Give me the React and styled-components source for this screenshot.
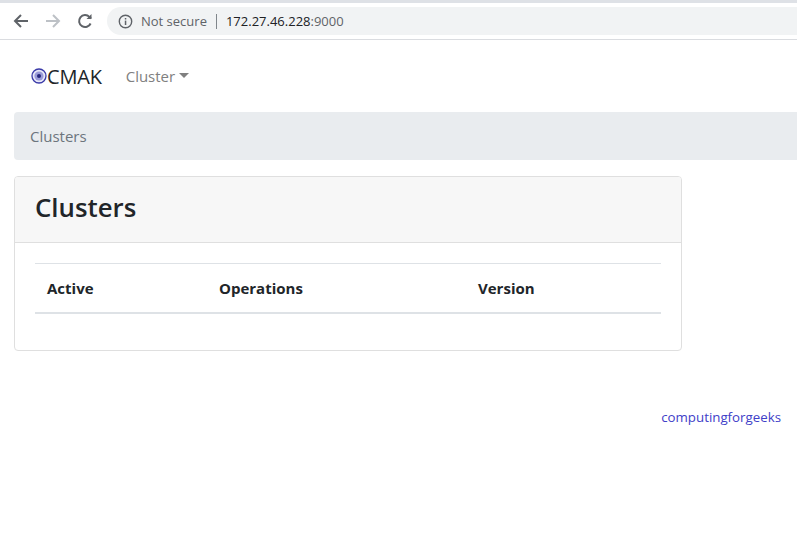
import React from 'react';
import styled, { createGlobalStyle } from 'styled-components';

const GlobalStyle = createGlobalStyle`
  html, body {
    margin: 0;
    padding: 0;
    background: #fff;
    overflow: hidden;
  }
  body {
    font-family: "Open Sans", "Noto Sans", "Liberation Sans", sans-serif;
    color: #212529;
  }
`;

const Page = styled.div`
  width: 797px;
  height: 547px;
  overflow: hidden;
`;

const TabStrip = styled.div`
  height: 3px;
  background: #dee1e6;
`;

const Toolbar = styled.div`
  height: 36px;
  display: flex;
  align-items: center;
  padding-left: 12px;
  background: #fff;
  border-bottom: 1px solid #dadce0;
`;

const NavIcon = styled.svg`
  width: 18px;
  height: 18px;
  flex: none;
  margin-right: 14px;
  fill: none;
  stroke: ${props => props.color};
  stroke-width: 2;
`;

const Omnibox = styled.div`
  flex: 1;
  height: 28px;
  margin-left: -1px;
  margin-right: -40px;
  padding-left: 11px;
  display: flex;
  align-items: center;
  background: #f1f3f4;
  border-radius: 14px;
  font-size: 13px;
`;

const InfoIcon = styled.svg`
  width: 15px;
  height: 15px;
  flex: none;
  margin-right: 8px;
`;

const NotSecure = styled.span`
  color: #5f6368;
  padding-right: 9px;
  border-right: 1px solid #80868b;
  line-height: 15px;
`;

const Host = styled.span`
  color: #202124;
  margin-left: 9px;
`;

const Port = styled.span`
  color: #5f6368;
`;

const Navbar = styled.nav`
  height: 72px;
  display: flex;
  align-items: center;
  padding-left: 31px;
`;

const Brand = styled.div`
  display: flex;
  align-items: center;
  font-size: 20px;
  color: #212529;
  letter-spacing: -0.2px;
  margin-right: 24px;
`;

const NavDropdown = styled.div`
  display: flex;
  align-items: center;
  font-size: 15px;
  color: #808080;
`;

const Caret = styled.span`
  width: 0;
  height: 0;
  margin-left: 4px;
  margin-bottom: 2px;
  border-top: 5px solid #808080;
  border-left: 5px solid transparent;
  border-right: 5px solid transparent;
`;

const Content = styled.main`
  padding-left: 14px;
`;

const Breadcrumb = styled.div`
  height: 48px;
  margin-right: -10px;
  padding-left: 16px;
  display: flex;
  align-items: center;
  background: #e9ecef;
  border-radius: 4px;
  font-size: 15px;
  color: #6c757d;
`;

const Card = styled.section`
  width: 668px;
  box-sizing: border-box;
  margin-top: 16px;
  height: 175px;
  background: #fff;
  border: 1px solid #dfdfdf;
  border-radius: 4px;
  overflow: hidden;
`;

const CardHeader = styled.header`
  height: 65px;
  padding-left: 20px;
  display: flex;
  align-items: center;
  background: #f7f7f7;
  border-bottom: 1px solid #dfdfdf;
`;

const CardTitle = styled.h3`
  margin: 0 0 6px;
  font-size: 25.8px;
  font-weight: 600;
  color: #212529;
`;

const CardBody = styled.div`
  padding: 20px 20px 0;
`;

const Table = styled.table`
  width: 100%;
  border-collapse: collapse;
  table-layout: fixed;
`;

const Th = styled.th`
  width: ${props => props.width}px;
  height: 49px;
  padding: 0 12px;
  box-sizing: border-box;
  text-align: left;
  font-size: 15px;
  font-weight: 700;
  color: #212529;
  border-top: 1px solid #dee2e6;
  border-bottom: 2px solid #dee2e6;
`;

const Footer = styled.footer`
  margin-top: 57px;
  padding-right: 16px;
  text-align: right;
  font-size: 13.3px;
  color: #4040c8;
`;

const App = () => (
  <Page>
    <GlobalStyle />
    <TabStrip />
    <Toolbar>
      <NavIcon viewBox="0 0 18 18" color="#5f6368">
        <path d="M16 9H3M9 3L3 9l6 6" />
      </NavIcon>
      <NavIcon viewBox="0 0 18 18" color="#bdc1c6">
        <path d="M2 9h13M9 3l6 6-6 6" />
      </NavIcon>
      <NavIcon viewBox="0 0 18 18" color="#5f6368">
        <path d="M14.6 11.5A6 6 0 1 1 13.4 4.9L15 6.5" />
        <path d="M15.5 2v5h-5" fill="#5f6368" stroke="none" />
      </NavIcon>
      <Omnibox>
        <InfoIcon viewBox="0 0 15 15">
          <circle cx="7.5" cy="7.5" r="6.2" fill="none" stroke="#5f6368" strokeWidth="1.4" />
          <rect x="6.8" y="6.6" width="1.5" height="4.4" fill="#5f6368" />
          <rect x="6.8" y="4" width="1.5" height="1.5" fill="#5f6368" />
        </InfoIcon>
        <NotSecure>Not secure</NotSecure>
        <Host>172.27.46.228<Port>:9000</Port></Host>
      </Omnibox>
    </Toolbar>
    <Navbar>
      <Brand>
        <svg width="16" height="16" viewBox="0 0 16 16">
          <circle cx="8" cy="8" r="7" fill="#e8e8f8" stroke="#3a3aa8" strokeWidth="1.3" />
          <circle cx="8" cy="8" r="4.6" fill="#9a9ad8" />
          <circle cx="8" cy="8" r="2" fill="#26267c" />
        </svg>
        CMAK
      </Brand>
      <NavDropdown>
        Cluster
        <Caret />
      </NavDropdown>
    </Navbar>
    <Content>
      <Breadcrumb>Clusters</Breadcrumb>
      <Card>
        <CardHeader>
          <CardTitle>Clusters</CardTitle>
        </CardHeader>
        <CardBody>
          <Table>
            <thead>
              <tr>
                <Th width={172}>Active</Th>
                <Th width={259}>Operations</Th>
                <Th>Version</Th>
              </tr>
            </thead>
          </Table>
        </CardBody>
      </Card>
    </Content>
    <Footer>computingforgeeks</Footer>
  </Page>
);

export default App;
